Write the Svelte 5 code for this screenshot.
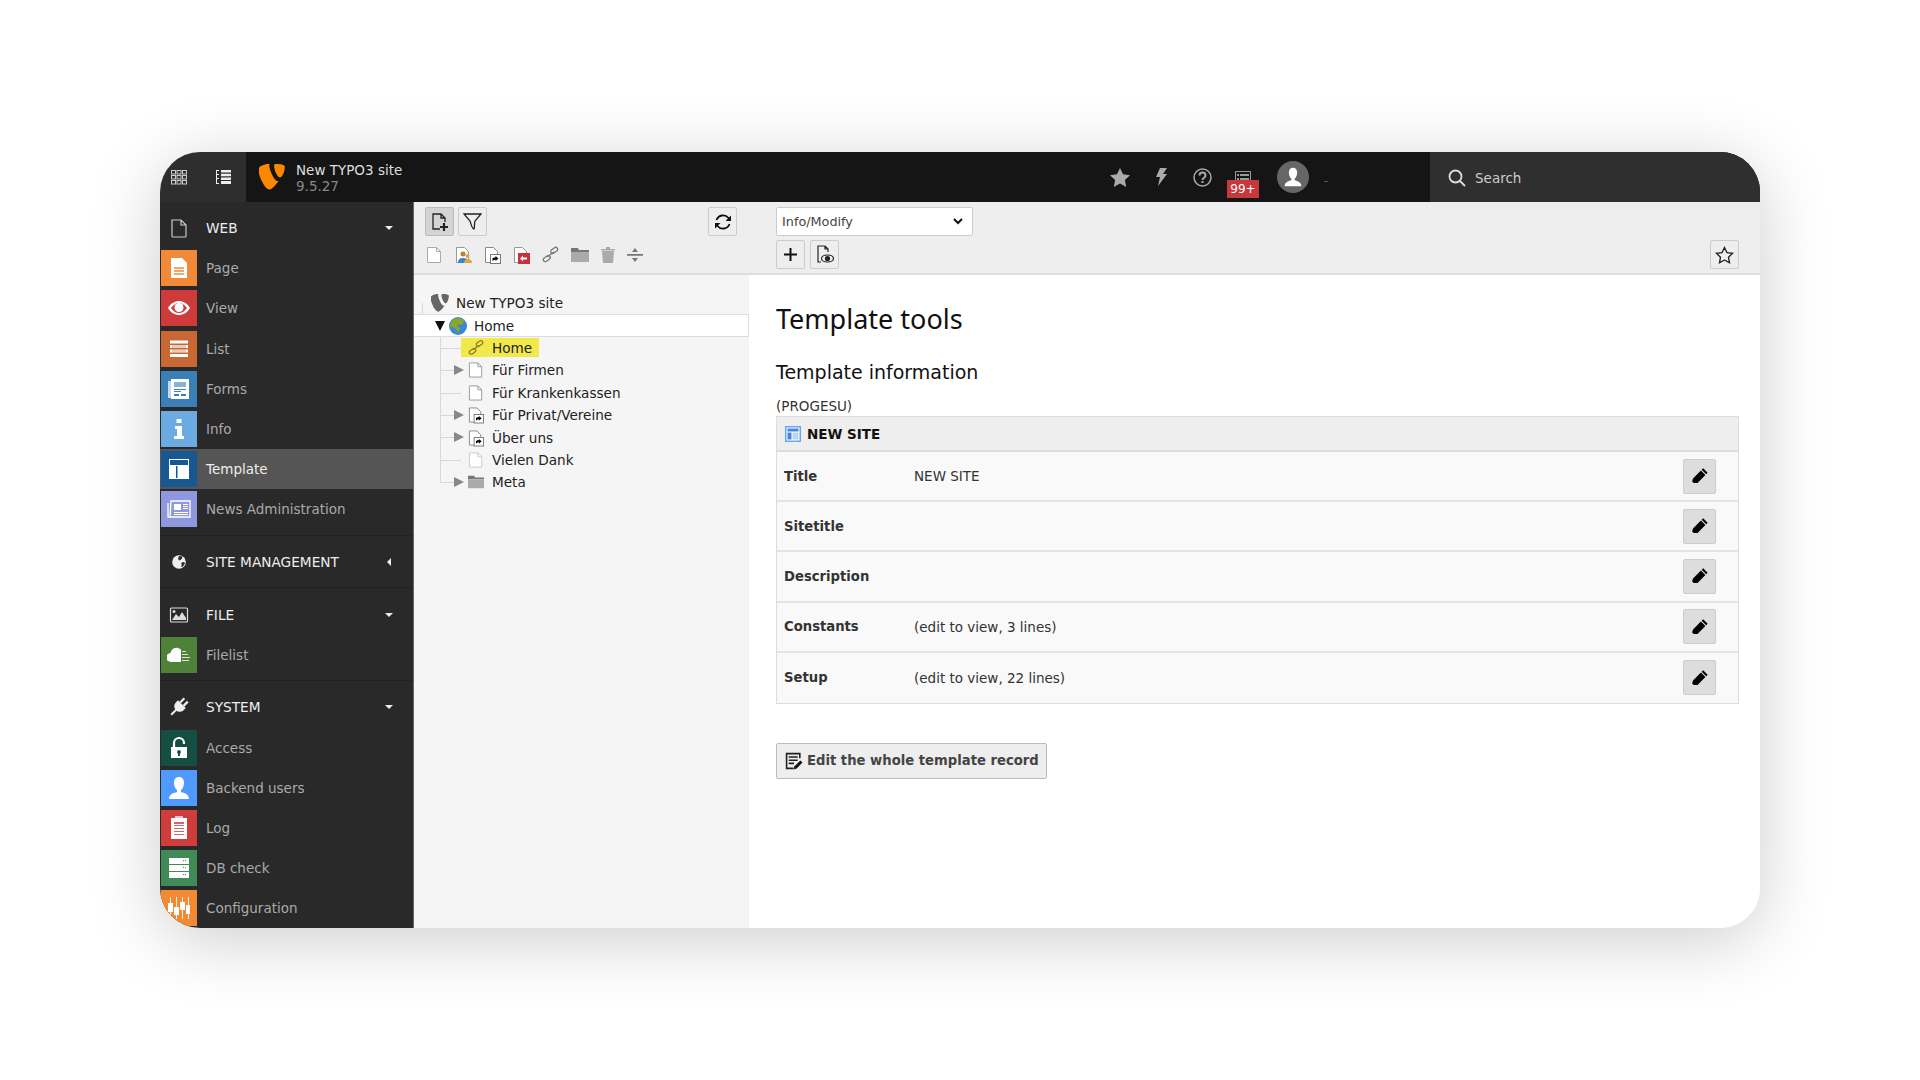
<script>
  const webItems = [
    { name: 'Page', color: '#f08a38', icon: 'page' },
    { name: 'View', color: '#cf3b3b', icon: 'eye' },
    { name: 'List', color: '#c96835', icon: 'list' },
    { name: 'Forms', color: '#3a7fb6', icon: 'forms' },
    { name: 'Info', color: '#6caae2', icon: 'info' },
    { name: 'Template', color: '#175892', icon: 'template', active: true },
    { name: 'News Administration', color: '#8f98de', icon: 'news' }
  ];
  const systemItems = [
    { name: 'Access', color: '#154f43', icon: 'lock' },
    { name: 'Backend users', color: '#4f9aff', icon: 'user' },
    { name: 'Log', color: '#cf3c3c', icon: 'log' },
    { name: 'DB check', color: '#3f8a56', icon: 'db' },
    { name: 'Configuration', color: '#f28933', icon: 'config' }
  ];
  const groups = [
    { title: 'WEB', icon: 'gpage', items: webItems },
    { title: 'SITE MANAGEMENT', icon: 'globe', items: [], collapsed: true },
    { title: 'FILE', icon: 'image', items: [{ name: 'Filelist', color: '#4f8138', icon: 'cloud' }] },
    { title: 'SYSTEM', icon: 'plug', items: systemItems }
  ];
  const tree = [
    { name: 'Home', kind: 'link', mark: true },
    { name: 'Für Firmen', kind: 'doc', arrow: true },
    { name: 'Für Krankenkassen', kind: 'doc' },
    { name: 'Für Privat/Vereine', kind: 'shortcut', arrow: true },
    { name: 'Über uns', kind: 'shortcut', arrow: true },
    { name: 'Vielen Dank', kind: 'hidden' },
    { name: 'Meta', kind: 'folder', arrow: true }
  ];
  const rows = [
    { key: 'Title', value: 'NEW SITE' },
    { key: 'Sitetitle', value: '' },
    { key: 'Description', value: '' },
    { key: 'Constants', value: '(edit to view, 3 lines)' },
    { key: 'Setup', value: '(edit to view, 22 lines)' }
  ];
</script>

{#snippet typo3(fill, size)}
  <svg width={size} height={size} viewBox="0 0 26 26"><path fill={fill} d="M19.600 16.900c-.4.1-.7.2-1.100.2-3.300 0-8.200-11.600-8.200-15.400 0-1.400.3-1.900.8-2.300C6.900-.100 1.800 1.400 0 3.600c-.4.5-.6 1.300-.6 2.300C-.6 11.900 5.800 25.500 10.300 25.500c2.100 0 5.600-3.400 9.300-8.600z"/><path fill={fill} d="M17.500 0c4.100 0 8.300.7 8.300 3 0 4.800-3 10.600-4.600 10.600-2.700 0-6.100-7.800-6.100-11.700C15.100.1 15.800 0 17.500 0z"/></svg>
{/snippet}

{#snippet tile(name)}
  <svg width="24" height="24" viewBox="0 0 24 24" fill="#fff">
    {#if name === 'page'}
      <path d="M4 2h11l5 5v15H4z"/><path fill="#f08a38" opacity=".75" d="M7 11h10v2H7zm0 3h10v2H7zm0 3h10v2H7z"/>
    {:else if name === 'eye'}
      <path fill-rule="evenodd" d="M1 12c3-5 7-7 11-7s8 2 11 7c-3 5-7 7-11 7S4 17 1 12zm3 0c2 3 5 5 8 5s6-2 8-5c-2-3-5-5-8-5s-6 2-8 5z"/><circle cx="12" cy="11.500" r="4.500"/>
    {:else if name === 'list'}
      <path d="M3 3.500h18v3H3zm0 4.500h18v3H3zm0 4.500h18v3H3zm0 4.500h18v3H3z"/><path fill="#c96835" opacity=".35" d="M5 8h14v3H5zm0 4.500h14v3H5z"/>
    {:else if name === 'forms'}
      <path opacity=".7" d="M1 4h3v17H1z"/><path d="M4 2h18v20H4z"/><path fill="#3a7fb6" opacity=".6" d="M7 5h12v5H7z"/><path fill="#3a7fb6" d="M7 12h12v1H7zm0 2h7v1H7zm0 3h5v2H7zm7 0h5v2h-5z"/>
    {:else if name === 'info'}
      <path d="M9.500 2h5v4h-5zM8 9h7v10h2v3H7v-3h3v-7H8z"/>
    {:else if name === 'template'}
      <path fill-rule="evenodd" d="M2 2h20v20H2zm1 1v5h18V3z"/><path fill="#175892" d="M9 9h1.500v12H9z"/>
    {:else if name === 'news'}
      <path fill="none" stroke="#fff" stroke-width="1.300" d="M1 6v14h2M4 4h19v16H3z"/><path d="M7 7h7v6H7zm9 0h5v1h-5zm0 2h5v1h-5zm0 2h5v1h-5zM7 15h14v1H7zm0 2h14v1H7z"/>
    {:else if name === 'cloud'}
      <path d="M4 19a4.500 4.500 0 0 1-.5-9 6 6 0 0 1 9.500-4 5 5 0 0 1 1 .5V19z"/><path d="M15 8h4v1h-4zm0 3h6v1h-6zm0 3h8v1h-8zm0 3h7v1h-7z" opacity=".8"/>
    {:else if name === 'lock'}
      <path fill-rule="evenodd" d="M4 11h16v11H4zm8 3a2 2 0 0 0-1 3.700V20h2v-2.300A2 2 0 0 0 12 14z"/><path fill="none" stroke="#fff" stroke-width="2.200" d="M7 11V7a5 5 0 0 1 10 0v1"/>
    {:else if name === 'user'}
      <path d="M12 1c3.500 0 5 2.500 5 6 0 3-1.500 6-3 7v2c3 1 8 2 8 7H2c0-5 5-6 8-7v-2C8.500 13 7 10 7 7c0-3.500 1.500-6 5-6z"/>
    {:else if name === 'log'}
      <path d="M4 2h16v21H4z"/><path opacity=".7" d="M8 0h8v3H8z"/><path fill="#cf3c3c" d="M7 6h10v2H7zm0 3h10v1H7zm0 3h10v1H7zm0 3h10v1H7zm0 3h10v1H7z" opacity=".8"/>
    {:else if name === 'db'}
      <path d="M2 2h20v6H2zm0 7h20v6H2zm0 7h20v6H2z"/><path fill="#3f8a56" d="M16 4h1v1h-1zm2 0h1v1h-1zm-2 7h1v1h-1zm2 0h1v1h-1zm-2 7h1v1h-1zm2 0h1v1h-1z"/>
    {:else}
      <path d="M3 1h1v22H3zm6 0h1v22H9zm6 0h1v22h-1zm6 0h1v22h-1z" opacity=".85"/><path d="M1 7h5v9H1zm6 4h5v8H7zm6-5h5v8h-5zm6 3h4v9h-4z"/>
    {/if}
  </svg>
{/snippet}

{#snippet head(name)}
  <svg width="20" height="20" viewBox="0 0 20 20">
    {#if name === 'gpage'}
      <path fill="none" stroke="#ccc" stroke-width="1.200" d="M3 2h9l5 5v11a1 1 0 0 1-1 1H4a1 1 0 0 1-1-1zM12 2v5h5"/>
    {:else if name === 'globe'}
      <circle cx="10" cy="10" r="6.800" fill="#eee"/><path fill="#2a2a2a" d="M10 4l3.500.5-.8 2.500-2 1.500L9 7zm2.500 6.500l2.500-.5 1 1.500-2.500 3.500h-1z"/>
    {:else if name === 'image'}
      <rect x="1.500" y="3" width="17" height="14" rx="1" fill="none" stroke="#ddd" stroke-width="1.200"/><path fill="#ddd" d="M3 15l4-6 3 3 3-5 4 6v2z"/><circle cx="5" cy="6.500" r="1.500" fill="#ddd"/>
    {:else}
      <g fill="#eee" transform="rotate(45 10 10)">
        <rect x="6.500" y="0" width="2.200" height="6"/><rect x="11.300" y="0" width="2.200" height="6"/>
        <path d="M4.500 6h11v3a5.500 5.500 0 0 1-11 0z"/><rect x="9" y="14" width="2" height="7"/>
      </g>
    {/if}
  </svg>
{/snippet}

{#snippet doc(fill)}
  <svg width="17" height="18" viewBox="0 0 17 18"><path fill="#fff" stroke={fill} d="M1.500 1.500h9l4 4v11h-13z"/><path fill="none" stroke={fill} d="M10.500 1.500v4h4"/></svg>
{/snippet}

{#snippet shortcut()}
  <svg width="17" height="18" viewBox="0 0 17 18"><path fill="#fff" stroke="#888" d="M1.500 1.500h8l4 4v11h-12z"/><rect x="6.500" y="8.500" width="10" height="9" fill="#fff" stroke="#777"/><path d="M8.500 15v-2c0-1 1-1.500 3-1.500V10l3 2.500-3 2.500v-1.500c-1 0-2 .5-3 1.500z"/></svg>
{/snippet}

{#snippet folder()}
  <svg width="18" height="14" viewBox="0 0 18 14"><path fill="#777" d="M0 0h7l1 2h10v2H0z"/><path fill="#aaa" d="M0 4h18v10H0z"/></svg>
{/snippet}

{#snippet link(color)}
  <svg width="17" height="17" viewBox="0 0 17 17" fill="none" stroke={color} stroke-width="1.300"><rect x="8.500" y="2.500" width="7.500" height="4" rx="2" transform="rotate(-35 12 4.500)"/><rect x="1" y="10.500" width="7.500" height="4" rx="2" transform="rotate(-35 5 12.500)"/><path d="M5 11l7-5"/></svg>
{/snippet}

{#snippet pencil()}
  <svg width="18" height="18" viewBox="0 0 16 16"><path d="M10.800 1.200l4 4-1.300 1.300-4-4zM8.800 3.200l4 4-7 7H2.500L1 12.800 1.800 10.200z"/></svg>
{/snippet}

<div class="window">
  <header class="topbar">
    <div class="top-left">
      <svg width="16" height="15" viewBox="0 0 16 15" fill="none" stroke="#ccc"><rect x=".5" y=".5" width="4" height="3.500"/><rect x="6" y=".5" width="4" height="3.500"/><rect x="11.500" y=".5" width="4" height="3.500"/><rect x=".5" y="5.500" width="4" height="3.500"/><rect x="6" y="5.500" width="4" height="3.500"/><rect x="11.500" y="5.500" width="4" height="3.500"/><rect x=".5" y="10.500" width="4" height="3.500"/><rect x="6" y="10.500" width="4" height="3.500"/><rect x="11.500" y="10.500" width="4" height="3.500"/></svg>
      <svg width="15" height="14" viewBox="0 0 15 14" fill="#eee"><path d="M5 0h10v2.500H5zm0 3.700h10v2.500H5zm0 3.700h10v2.500H5zm0 3.600h10V14H5zM0 0h3v1H1v12h2v1H0zm1 4h2v1H1zm0 4h2v1H1z"/></svg>
    </div>
    <div class="top-main">
      <div class="brand">
        {@render typo3('#ff8700', 26)}
        <div class="site">
          <span class="site-name">New TYPO3 site</span>
          <span class="site-version">9.5.27</span>
        </div>
      </div>
      <div class="tools">
        <svg class="t-star" width="20" height="19" viewBox="0 0 20 19" fill="#aaa"><path d="M10 0l3 6.300 7 .9-5.100 4.800 1.300 7L10 15.600 3.800 19l1.300-7L0 7.200l7-.9z"/></svg>
        <svg class="t-bolt" width="11" height="18" viewBox="0 0 11 18" fill="#aaa"><path d="M4 0h7L7 6h4L2 18l2-9H0z"/></svg>
        <svg class="t-help" width="19" height="19" viewBox="0 0 19 19"><circle cx="9.500" cy="9.500" r="8.500" fill="none" stroke="#aaa" stroke-width="1.500"/><path fill="none" stroke="#aaa" stroke-width="2" d="M6.500 7.500c0-4 6-4 6 0 0 2.500-3 2-3 4.500"/><rect x="8.500" y="13" width="2" height="2" fill="#aaa"/></svg>
        <div class="t-log">
          <svg width="16" height="16" viewBox="0 0 16 16" fill="#999"><path fill="none" stroke="#999" d="M.5.5h15v15H.5z"/><path d="M2 3h2v2H2zm3 0h9v2H5zM2 7h2v2H2zm3 0h9v2H5z"/></svg>
          <span class="badge">99+</span>
        </div>
        <div class="avatar">
          <svg width="20" height="20" viewBox="0 0 24 24" fill="#fff"><path d="M12 1c3.500 0 5 2.500 5 6 0 3-1.500 6-3 7v2c3 1 8 2 8 7H2c0-5 5-6 8-7v-2C8.500 13 7 10 7 7c0-3.500 1.500-6 5-6z"/></svg>
        </div>
        <span class="username">_</span>
      </div>
      <div class="search">
        <svg width="18" height="18" viewBox="0 0 18 18" fill="none" stroke="#ddd" stroke-width="1.800"><circle cx="7.500" cy="7.500" r="6"/><path d="M12 12l5 5"/></svg>
        <span>Search</span>
      </div>
    </div>
  </header>

  <div class="main">
    <nav class="sidebar">
      {#each groups as group}
        <section class="group">
          <div class="group-head">
            <span class="head-icon">{@render head(group.icon)}</span>
            <span class="group-title">{group.title}</span>
            <span class={group.collapsed ? 'caret left' : 'caret'}></span>
          </div>
          {#each group.items as item}
            <div class={item.active ? 'item active' : 'item'}>
              <span class="tile" style="background: {item.color}">{@render tile(item.icon)}</span>
              <span>{item.name}</span>
            </div>
          {/each}
        </section>
      {/each}
    </nav>

    <div class="tree-col">
      <div class="docheader tree-head">
        <div class="btn-row spread">
          <div class="btn-row">
            <span class="btn pressed">
              <svg width="20" height="20" viewBox="0 0 20 20" fill="none" stroke="#222" stroke-width="1.300"><path d="M10 17H3V2h8l4 4v4M11 2v4h4"/><path stroke-width="2.200" d="M14 11v8M10 15h8"/></svg>
            </span>
            <span class="btn">
              <svg width="19" height="19" viewBox="0 0 19 19" fill="none" stroke="#222" stroke-width="1.300"><path d="M1 2h17l-6 7c-1 2 0 6-1 8-2 0-3-5-4-8z"/></svg>
            </span>
          </div>
          <span class="btn">
            <svg width="18" height="18" viewBox="0 0 18 18" fill="none" stroke="#111" stroke-width="1.800"><path d="M2.500 7a7 7 0 0 1 12-2l1.500 2M15.500 11a7 7 0 0 1-12 2L2 11"/><path fill="#111" stroke="none" d="M17 2.500V8h-5.500zM1 15.500V10h5.500z"/></svg>
          </span>
        </div>
        <div class="page-tools">
          {@render doc('#aaa')}
          <svg width="17" height="18" viewBox="0 0 17 18"><path fill="#fff" stroke="#999" d="M1.500 1.500h8l4 4v11h-12z"/><circle cx="8" cy="8" r="2.500" fill="#b88232"/><path fill="#3f82c8" d="M3 17c0-4 2-5 5-5s5 1 5 5z"/><circle cx="12.500" cy="10" r="2" fill="#e0a640"/><path fill="#e0a640" d="M9 17c0-3 2-4 4-4s4 1 4 4z"/></svg>
          {@render shortcut()}
          <svg width="17" height="18" viewBox="0 0 17 18"><path fill="#fff" stroke="#999" d="M1.500 1.500h8l4 4v11h-12z"/><rect x="5" y="7" width="12" height="11" fill="#c8303a"/><path fill="#fff" d="M14 11.500v2h-4v2L7 12.500l3-3v2z"/></svg>
          {@render link('#777')}
          {@render folder()}
          <svg width="14" height="16" viewBox="0 0 14 16" fill="#aaa"><path d="M1 4h12l-1 12H2zM0 2h14v1.500H0zM5 0h4v2H5z"/></svg>
          <svg width="16" height="14" viewBox="0 0 16 14" fill="#777"><path d="M0 6h16v1.800H0zM8 0l3 4H5zM8 14l-3-4h6z"/></svg>
        </div>
      </div>
      <div class="tree">
        <svg class="tree-lines" width="60" height="200" fill="none" stroke="#d8d8d8">
          <path d="M8.500 11v22.500h14"/>
          <path d="M26.500 42v148.500h14M26 56.500h21M26 78.500h14M26 101.500h21M26 123.500h14M26 145.500h14M26 168.500h21"/>
        </svg>
        <div class="node root">
          <span class="root-logo">{@render typo3('#666', 18)}</span>
          <span>New TYPO3 site</span>
        </div>
        <div class="node home">
          <span class="down"></span>
          <svg width="18" height="18" viewBox="0 0 18 18"><circle cx="9" cy="9" r="9" fill="#3f86d6"/><path fill="#8aa825" d="M5 2c3-2 8-1 10 2l-2 4-3-1-2 2 3 2-2 5-2-4-3-2-3 0C1 7 2 4 5 2z"/></svg>
          <span>Home</span>
        </div>
        {#each tree as page}
          <div class="node child">
            {#if page.arrow}<span class="right"></span>{/if}
            <span class="label" class:mark={page.mark}>
              <span class="node-icon">
                {#if page.kind === 'link'}{@render link('#8a7a20')}
                {:else if page.kind === 'doc'}{@render doc('#999')}
                {:else if page.kind === 'hidden'}{@render doc('#ccc')}
                {:else if page.kind === 'shortcut'}{@render shortcut()}
                {:else}{@render folder()}{/if}
              </span>
              {page.name}
            </span>
          </div>
        {/each}
      </div>
    </div>

    <div class="content-col">
      <div class="docheader">
        <div class="select">
          <span>Info/Modify</span>
          <svg width="10" height="7" viewBox="0 0 10 7" fill="none" stroke="#111" stroke-width="2"><path d="M1 1l4 4 4-4"/></svg>
        </div>
        <div class="btn-row spread">
          <div class="btn-row gap5">
            <span class="btn"><svg width="13" height="13" viewBox="0 0 13 13" fill="#111"><path d="M5.500 0h2v5.500H13v2H7.500V13h-2V7.500H0v-2h5.500z"/></svg></span>
            <span class="btn"><svg width="18" height="19" viewBox="0 0 18 19" fill="none" stroke="#222" stroke-width="1.200"><path d="M5 17H2V1h7l3 3v3M9 1v3h3"/><ellipse cx="11.500" cy="13.500" rx="6" ry="3.500"/><circle cx="11.500" cy="13.500" r="2" fill="#222"/></svg></span>
          </div>
          <span class="btn"><svg width="19" height="18" viewBox="0 0 20 19" fill="none" stroke="#222" stroke-width="1.400"><path d="M10 1.500l2.600 5.400 5.900.8-4.300 4.100 1.100 5.900-5.300-2.900-5.300 2.900 1.100-5.900L1.500 7.700l5.900-.8z"/></svg></span>
        </div>
      </div>
      <main class="body">
        <h1>Template tools</h1>
        <h2>Template information</h2>
        <p class="pid">(PROGESU)</p>
        <div class="table">
          <div class="table-head">
            <svg width="16" height="16" viewBox="0 0 16 16"><rect width="16" height="16" fill="#6aa5f0"/><rect x="1.500" y="1.500" width="13" height="13" fill="#fff"/><path fill="#4a86d8" d="M2.500 2.500h11v3h-11zM2.500 6.500h4v7h-4z"/><path fill="#b8d4f8" d="M7.500 6.500h6v7h-6z"/></svg>
            <strong>NEW SITE</strong>
          </div>
          {#each rows as row}
            <div class="row">
              <span class="key">{row.key}</span>
              <span class="value">{row.value}</span>
              <span class="edit">{@render pencil()}</span>
            </div>
          {/each}
        </div>
        <div class="record">
          <svg width="18" height="18" viewBox="0 0 17 17"><path fill="none" stroke="#222" stroke-width="1.500" d="M14 6V1.500H1.500v14H8"/><path fill="#222" d="M3.500 4h8.500v1.500H3.500zm0 3h8.500v1.500H3.500zm0 3h5v1.500h-5z"/><path fill="#111" d="M14.500 8l2 2-5.500 5.500-3 1 1-3z"/></svg>
          <span>Edit the whole template record</span>
        </div>
      </main>
    </div>
  </div>
</div>

<style>
  :global(body) {
    background: #fff;
    font-family: "DejaVu Sans", Verdana, sans-serif;
  }

  .window {
    width: 1600px;
    height: 776px;
    margin: 152px 160px;
    border-radius: 40px;
    overflow: hidden;
    display: flex;
    flex-direction: column;
    box-shadow: 0 12px 70px rgba(0, 0, 0, 0.2);
    font-size: 13.500px;
    color: #222;
  }

  .topbar {
    height: 50px;
    flex: none;
    display: flex;
    background: #2e2e2e;
  }
  .top-left {
    width: 86px;
    display: flex;
    align-items: center;
    gap: 29px;
    padding-left: 11px;
    box-sizing: border-box;
  }
  .top-main {
    flex: 1;
    display: flex;
    align-items: center;
    background: #151515;
  }
  .brand {
    width: 600px;
    display: flex;
    align-items: center;
    gap: 11px;
    padding-left: 13px;
    box-sizing: border-box;
  }
  .site {
    display: flex;
    flex-direction: column;
    line-height: 16px;
    margin-top: 2px;
  }
  .site-name { color: #ddd; font-size: 13.500px; }
  .site-version { color: #888; font-size: 13.500px; }
  .tools {
    flex: 1;
    display: flex;
    align-items: center;
    padding-left: 264px;
    height: 100%;
  }
  .t-bolt { margin-left: 26px; }
  .t-help { margin-left: 26px; }
  .t-log { position: relative; margin-left: 23px; width: 16px; height: 16px; margin-top: 4px; }
  .badge {
    position: absolute;
    left: -8px;
    top: 9px;
    width: 32px;
    height: 18px;
    background: #c8373c;
    color: #fff;
    font-size: 12px;
    line-height: 18px;
    text-align: center;
  }
  .avatar {
    width: 32px;
    height: 32px;
    margin-left: 26px;
    margin-top: -1px;
    border-radius: 50%;
    background: #666;
    display: flex;
    align-items: center;
    justify-content: center;
  }
  .username { color: #777; font-size: 8px; margin-left: 15px; }
  .search {
    width: 330px;
    height: 100%;
    background: #2f2f2f;
    display: flex;
    align-items: center;
    gap: 9px;
    padding: 1px 0 0 18px;
    box-sizing: border-box;
    color: #ccc;
  }

  .main { flex: 1; display: flex; min-height: 0; }

  .sidebar {
    width: 254px;
    flex: none;
    background: #292929;
    border-right: 1px solid #666;
    box-sizing: border-box;
    font-size: 13.500px;
  }
  .group {
    padding: 6px 0 5.400px;
    border-bottom: 1px solid #222;
  }
  .group:last-child { border-bottom: none; }
  .group-head {
    height: 40.200px;
    display: flex;
    align-items: center;
    color: #eee;
  }
  .head-icon {
    width: 37px;
    display: flex;
    justify-content: center;
  }
  .group-title { flex: 1; padding-left: 9px; font-size: 13.700px; }
  .caret {
    width: 0;
    height: 0;
    margin-right: 20px;
    border: 4px solid transparent;
    border-top: 4px solid #eee;
    border-bottom: none;
  }
  .caret.left {
    margin-right: 22px;
    border: 4px solid transparent;
    border-right: 4px solid #eee;
    border-left: none;
  }
  .item {
    height: 40.200px;
    display: flex;
    align-items: center;
    gap: 9px;
    padding-left: 1px;
    color: #aaa;
  }
  .item.active { background: #555; color: #eee; }
  .tile {
    width: 36px;
    height: 36px;
    display: flex;
    align-items: center;
    justify-content: center;
  }

  .tree-col {
    width: 335px;
    flex: none;
    display: flex;
    flex-direction: column;
    background: #f5f5f5;
  }
  .content-col {
    flex: 1;
    display: flex;
    flex-direction: column;
    background: #fff;
  }
  .docheader {
    height: 73px;
    flex: none;
    box-sizing: border-box;
    background: #eee;
    border-bottom: 2px solid #ddd;
    padding: 5px 21px 0 27px;
    display: flex;
    flex-direction: column;
    gap: 4px;
  }
  .tree-head { padding: 5px 12px 0 11px; gap: 5px; }
  .btn-row { display: flex; gap: 4px; align-items: center; }
  .btn-row.gap5 { gap: 5px; }
  .spread { justify-content: space-between; }
  .btn {
    width: 29px;
    height: 29px;
    box-sizing: border-box;
    border: 1px solid #ccc;
    border-radius: 2px;
    background: #eee;
    display: flex;
    align-items: center;
    justify-content: center;
  }
  .btn.pressed { background: #d4d4d4; border-color: #bbb; }
  .page-tools {
    display: flex;
    align-items: center;
    gap: 12px;
    padding-left: 1px;
    height: 27px;
  }
  .select {
    width: 197px;
    height: 29px;
    box-sizing: border-box;
    background: #fff;
    border: 1px solid #ccc;
    border-radius: 2px;
    padding: 0 9px 0 5px;
    display: flex;
    align-items: center;
    justify-content: space-between;
    font-size: 12.800px;
    color: #444;
  }

  .tree {
    position: relative;
    flex: 1;
    padding-top: 17px;
    font-size: 13.600px;
    color: #222;
  }
  .tree-lines { position: absolute; left: 0; top: 17px; }
  .node {
    height: 22.400px;
    display: flex;
    align-items: center;
    position: relative;
    box-sizing: border-box;
  }
  .root { padding-left: 17px; gap: 7px; }
  .root-logo { display: flex; }
  .home {
    background: #fff;
    border: 1px solid #ddd;
    border-left: none;
    padding-left: 35px;
    gap: 7px;
  }
  .down {
    position: absolute;
    left: 21px;
    top: 6px;
    border: 5.500px solid transparent;
    border-top: 10px solid #111;
    border-bottom: none;
  }
  .right {
    position: absolute;
    left: 40px;
    top: 6px;
    border: 5.500px solid transparent;
    border-left: 10px solid #888;
    border-right: none;
  }
  .child { padding-left: 47px; }
  .label {
    display: flex;
    align-items: center;
    height: 19px;
    padding: 0 7px;
    gap: 8px;
  }
  .label.mark { background: #f1e94c; }
  .node-icon { width: 16px; display: flex; justify-content: center; }

  .body { padding: 0 21px 0 27px; }
  h1 {
    margin: 24px 0 0;
    font-family: "Noto Sans", sans-serif;
    font-size: 27px;
    line-height: 40px;
    font-weight: 400;
    color: #111;
  }
  h2 {
    margin: 21px 0 0;
    font-size: 19px;
    line-height: 24px;
    font-weight: 400;
    color: #111;
  }
  .pid {
    margin: 13px 0 0;
    font-size: 13.500px;
    line-height: 18px;
    color: #333;
  }
  .table {
    margin-top: 1px;
    border: 1px solid #ddd;
    background: #f9f9f9;
  }
  .table-head {
    height: 33px;
    display: flex;
    align-items: center;
    gap: 6px;
    padding-left: 8px;
    background: #eee;
    border-bottom: 2px solid #ddd;
    color: #111;
  }
  .row {
    height: 50.200px;
    box-sizing: border-box;
    display: flex;
    align-items: center;
    border-bottom: 2px solid #e4e4e4;
    padding: 0 22px 0 7px;
  }
  .row:last-child { border-bottom: none; }
  .key { width: 130px; font-weight: 700; font-size: 13.200px; color: #333; }
  .value { flex: 1; color: #333; }
  .edit {
    width: 33px;
    height: 35px;
    background: #ddd;
    border: 1px solid #ccc;
    border-radius: 2px;
    box-sizing: border-box;
    display: flex;
    align-items: center;
    justify-content: center;
  }
  .record {
    margin-top: 39px;
    width: 271px;
    height: 36px;
    box-sizing: border-box;
    border: 1px solid #bbb;
    border-radius: 2px;
    background: #eee;
    display: flex;
    align-items: center;
    gap: 4px;
    padding-left: 8px;
    font-size: 13.200px;
    font-weight: 700;
    color: #444;
  }
</style>
